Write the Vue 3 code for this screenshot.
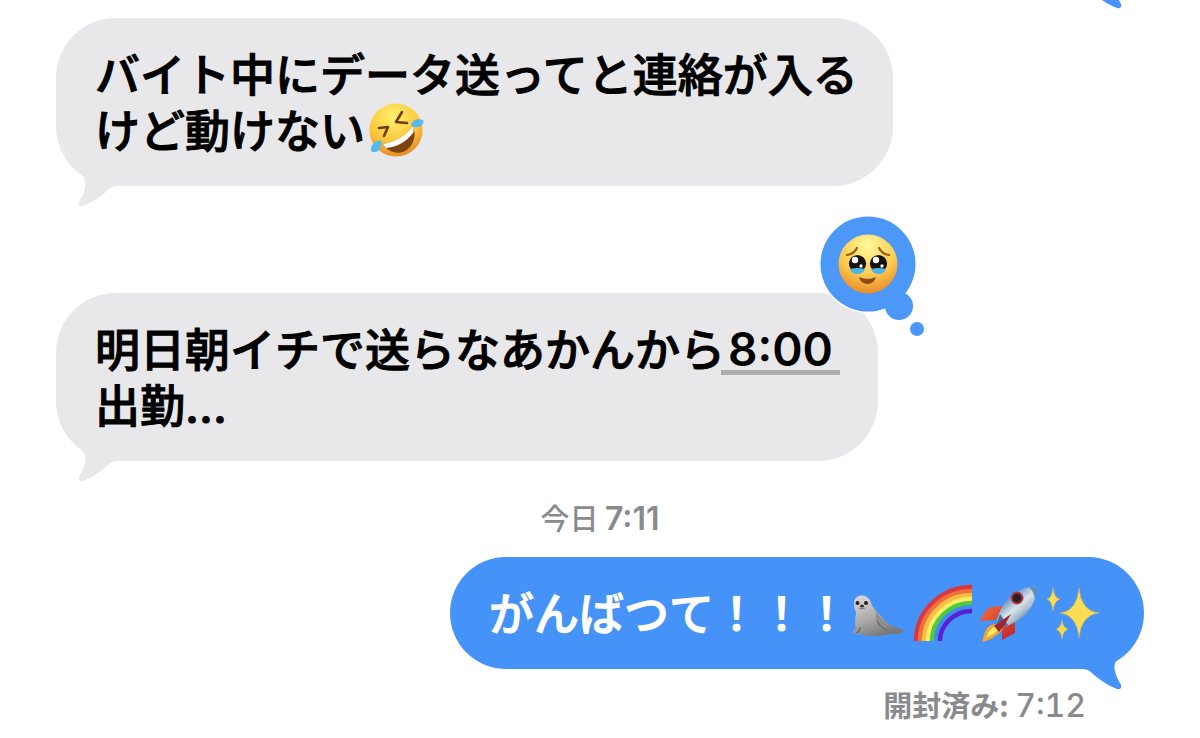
<script setup>
const rainbow = ['#d9363e', '#f0703a', '#f9bd45', '#f7ee62', '#55c93e', '#3d8df0', '#5a1fd0']
</script>

<template>
  <main class="chat">
    <div class="previous" aria-hidden="true">
      <svg class="tail tail-out" viewBox="0 0 64 62"><path d="M12 16C27 29 31 35 29 43C28 49 25 53 23 57C22 60 24 62 27 61C38 57 46 50 51 46C55 42 57 41 64 41L62 16Z" /></svg>
    </div>

    <article class="bubble incoming">
      <p>バイト中にデータ送ってと連絡が入る<br>けど動けない<svg class="emoji" viewBox="0 0 60 60" role="img" aria-label="大笑い">
          <defs>
            <radialGradient id="laugh" cx=".45" cy=".25" r=".75">
              <stop offset="0" stop-color="#fff06a" /><stop offset=".65" stop-color="#fcc63c" /><stop offset="1" stop-color="#e88a25" />
            </radialGradient>
          </defs>
          <circle cx="30" cy="30" r="26.5" fill="url(#laugh)" />
          <path d="M13 28L22 27L18 36M36 12L30 22L41 23" fill="none" stroke="#6c3b09" stroke-width="2.6" stroke-linejoin="round" stroke-linecap="round" />
          <path d="M17 44C29 42 40 36 47 26C51 36 47 47 39 51C31 55 22 52 17 44Z" fill="#7c430d" />
          <path d="M17 44C29 42 40 36 47 26C48 29 48 31 47 33C40 42 31 47 20 48Z" fill="#fff" />
          <path d="M45 24C47 20 52 18 57 20C59 24 54 28 49 27C46 27 45 26 45 24Z" fill="#55b9ed" />
          <path d="M14 40C9 41 4 46 5 51C9 54 14 51 15 46C16 43 16 41 14 40Z" fill="#55b9ed" />
        </svg></p>
      <svg class="tail" viewBox="0 0 64 62" aria-hidden="true"><path d="M12 16C27 29 31 35 29 43C28 49 25 53 23 57C22 60 24 62 27 61C38 57 46 50 51 46C55 42 57 41 64 41L62 16Z" /></svg>
    </article>

    <article class="bubble incoming second">
      <p>明日朝イチで送らなあかんから<a class="time-link" href="#">8:00</a><br>出勤<span class="latin">...</span></p>
      <svg class="tail" viewBox="0 0 64 62" aria-hidden="true"><path d="M12 16C27 29 31 35 29 43C28 49 25 53 23 57C22 60 24 62 27 61C38 57 46 50 51 46C55 42 57 41 64 41L62 16Z" /></svg>
      <svg class="reaction" viewBox="0 0 108 124" role="img" aria-label="うるうる顔のリアクション">
        <defs>
          <radialGradient id="plead" cx=".5" cy=".2" r=".8">
            <stop offset="0" stop-color="#fffa9a" /><stop offset=".6" stop-color="#fccb50" /><stop offset="1" stop-color="#e88b2b" />
          </radialGradient>
        </defs>
        <circle cx="50" cy="50" r="49" fill="#fff" />
        <g fill="#4b98f8">
          <circle cx="50" cy="50" r="47.5" /><circle cx="81" cy="92" r="14" /><circle cx="99" cy="115" r="7" />
        </g>
        <g transform="translate(20 20)">
          <circle cx="30" cy="30" r="29.5" fill="url(#plead)" />
          <path d="M9 21Q16 20 19 14M41 14Q44 20 51 21" fill="none" stroke="#9b5b14" stroke-width="2.2" stroke-linecap="round" />
          <g fill="#17120f"><circle cx="19.5" cy="29.5" r="8.6" /><circle cx="40.5" cy="29.5" r="8.6" /></g>
          <path d="M12 35Q19 33 27 35Q25 40 19.500 40Q14 40 12 35ZM33 35Q41 33 48 35Q46 40 40.500 40Q35 40 33 35Z" fill="#4bb5e8" />
          <g fill="#fff"><circle cx="17" cy="26" r="3.2" /><circle cx="38" cy="26" r="3.2" /><circle cx="23" cy="32" r="1.700" /><circle cx="44" cy="32" r="1.700" /></g>
          <path d="M21 43Q30 47 38 43Q36 50 29.500 50Q23 50 21 43Z" fill="#8b4b10" />
        </g>
      </svg>
    </article>

    <p class="stamp">今日 <span class="digits">7:11</span></p>

    <article class="bubble outgoing">
      <p>がんばつて！！！</p>
      <span class="emojis">
        <svg viewBox="0 0 60 60" role="img" aria-label="アザラシ">
          <defs>
            <linearGradient id="fur" x1="0" y1="0" x2=".5" y2="1">
              <stop offset="0" stop-color="#dededc" /><stop offset=".6" stop-color="#aaa9a7" /><stop offset="1" stop-color="#77797c" />
            </linearGradient>
          </defs>
          <path d="M5 20C5 10 20 10 22 20C24 26 30 30 35 37C39 42 47 43 54 47C56 50 50 52 41 51C35 53 22 54 14 52L4 50C3 48 6 46 7 45C5 38 7 34 7 29C5 26 5 23 5 20Z" fill="url(#fur)" />
          <path d="M27 29C32 34 36 42 38 47C31 45 28 40 27 36" fill="#8d8e8f" />
          <path d="M28 38Q32 45 38 47M11 44Q11 49 7 50" fill="none" stroke="#626669" stroke-width="1.200" />
          <circle cx="8.500" cy="20" r="2" fill="#28201f" /><circle cx="17" cy="20" r="2" fill="#28201f" />
          <ellipse cx="13" cy="23" rx="2" ry="1.500" fill="#39302e" />
          <path d="M10 25Q13 27 16 25" fill="none" stroke="#777" />
        </svg>
        <svg viewBox="0 0 60 60" role="img" aria-label="虹">
          <path v-for="(color, i) in rainbow" :key="color" :d="`M${3 + i * 4} 58A${56 - i * 4} ${54 - i * 4} 0 0 1 59 ${4 + i * 4}`" fill="none" :stroke="color" stroke-width="4.400" />
        </svg>
        <svg viewBox="0 0 60 60" role="img" aria-label="ロケット">
          <defs>
            <linearGradient id="hull" x1=".3" y1=".2" x2=".8" y2=".8">
              <stop offset="0" stop-color="#5689b5" /><stop offset=".45" stop-color="#d9e5ed" /><stop offset=".7" stop-color="#a9bdce" /><stop offset="1" stop-color="#4b6984" />
            </linearGradient>
            <linearGradient id="fin" x1="0" y1="0" x2="1" y2="1">
              <stop offset="0" stop-color="#f36a3a" /><stop offset="1" stop-color="#bd2430" />
            </linearGradient>
          </defs>
          <path d="M26 23L13 24Q7 28 3 38L19 37ZM38 36L38 50L25 57L25 45Z" fill="url(#fin)" />
          <path d="M17 41Q10 43 8 49L5 59Q14 57 18 53Q24 50 26 45Z" fill="#f6a52f" />
          <path d="M18 43Q12 46 9 55Q18 51 23 45Z" fill="#ffe868" />
          <path d="M20 39C21 28 29 15 39 9C46 5 54 3 59 4C60 13 56 24 49 31C43 37 34 42 25 45Z" fill="url(#hull)" />
          <path d="M20 39L25 45L31 42L23 31Z" fill="#486e91" />
          <path d="M17 43L34 31L27 43L22 49Z" fill="#9d2630" />
          <path d="M52 4Q57 9 58 16Q61 9 59 4Z" fill="#638db4" />
          <circle cx="40" cy="15" r="5.500" fill="#2b2026" stroke="#b93744" stroke-width="2" />
        </svg>
        <svg viewBox="0 0 60 60" role="img" aria-label="きらきら">
          <g fill="#fbdc52" stroke="#d7b456" stroke-width=".6">
            <path d="M38 5Q40 28 58 30Q40 32 38 55Q36 32 19 30Q36 28 38 5Z" />
            <path d="M12 5Q13 15 19 16Q13 18 12 28Q11 18 6 16Q11 15 12 5Z" />
            <path d="M21 37Q22 45 27 46Q22 48 21 56Q20 48 15 46Q20 45 21 37Z" />
          </g>
        </svg>
      </span>
      <svg class="tail tail-out" viewBox="0 0 64 62" aria-hidden="true"><path d="M12 16C27 29 31 35 29 43C28 49 25 53 23 57C22 60 24 62 27 61C38 57 46 50 51 46C55 42 57 41 64 41L62 16Z" /></svg>
    </article>
    <p class="receipt"><b>開封済み:</b> <span class="digits">7:12</span></p>
  </main>
</template>

<style>
body { background: #fff; }
</style>

<style scoped>
.chat {
  display: flex;
  flex-direction: column;
  align-items: flex-start;
  padding: 0 56px;
  color: #000;
  font-family: "Noto Sans CJK JP", sans-serif;
}
p { margin: 0; }
.previous { position: relative; align-self: stretch; height: 0; }
.previous .tail { bottom: -9px; }
.bubble {
  position: relative;
  border-radius: 60px;
  font-size: 45px;
  font-weight: 500;
  line-height: 56px;
}
.bubble p { -webkit-text-stroke: 1px currentColor; }
.incoming {
  margin-top: 18px;
  padding: 27px 35px 29px 39px;
  background: #e8e8ea;
}
.second { margin-top: 107px; padding-right: 38px; }
.emoji {
  width: 60px;
  height: 60px;
  margin: -1px 0 -3px 1px;
  vertical-align: top;
}
.time-link {
  display: inline-block;
  box-sizing: border-box;
  height: 55px;
  margin-left: -4px;
  padding: 0 7px;
  border-bottom: 5px solid #adadaf;
  color: inherit;
  font-family: Inter, sans-serif;
  font-size: 46px;
  font-weight: 600;
  line-height: 58px;
  text-decoration: none;
  vertical-align: top;
  -webkit-text-stroke: 0;
}
.latin { font-family: Inter, sans-serif; font-size: 46px; line-height: 1; }
.tail {
  position: absolute;
  left: 0;
  bottom: -21px;
  width: 64px;
  height: 62px;
  fill: #e8e8ea;
}
.tail-out { right: 0; left: auto; transform: scaleX(-1); fill: #4592f8; }
.reaction {
  position: absolute;
  top: -79px;
  right: -48px;
  width: 108px;
  height: 124px;
}
.stamp {
  align-self: center;
  margin-top: 40px;
  color: #8a8a8e;
  font-size: 29px;
  font-weight: 500;
  line-height: 32px;
}
.digits { font-family: Inter, sans-serif; font-size: 32px; font-weight: 500; line-height: 1; }
.stamp .digits { font-weight: 600; }
.outgoing {
  display: flex;
  align-items: flex-start;
  align-self: flex-end;
  margin-top: 22px;
  padding: 27px 43px 29px 39px;
  background: #4592f8;
  color: #fff;
}
.emojis { display: flex; gap: 4px; margin: -1px 0 -3px; }
.emojis svg { width: 60px; height: 60px; }
.receipt {
  align-self: flex-end;
  margin: 19px 58px 0 0;
  padding-bottom: 16px;
  color: #8a8a8e;
  font-size: 29px;
  line-height: 32px;
}
.receipt .digits { font-variant-numeric: tabular-nums; }
</style>
